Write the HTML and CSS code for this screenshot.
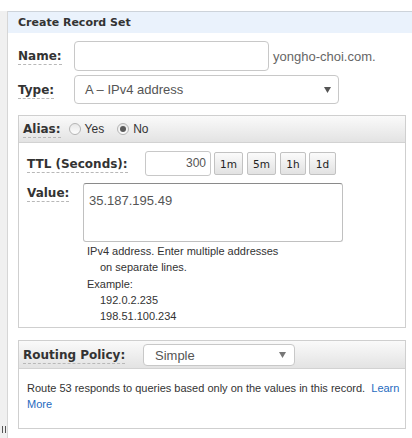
FILE: index.html
```html
<!DOCTYPE html>
<html>
<head>
<meta charset="utf-8">
<link rel="stylesheet" href="styles.css">
</head>
<body>
<div class="page">
  <div class="strip"><span class="grip"><i></i><i></i></span></div>
  <div class="main">
    <div class="header">Create Record Set</div>
    <div class="form">
      <div class="row name-row">
        <span class="lbl w56"><span class="u">Name:</span></span>
        <div class="input name-input"></div>
        <span class="suffix">yongho-choi.com.</span>
      </div>
      <div class="row type-row">
        <span class="lbl w56"><span class="u">Type:</span></span>
        <div class="select type-select"><span>A – IPv4 address</span><svg width="7" height="6" viewBox="0 0 7 6"><path d="M0 0H7L3.5 6Z" fill="#555"/></svg></div>
      </div>

      <div class="panel alias-panel">
        <div class="phead">
          <span class="lbl"><span class="u">Alias:</span></span>
          <span class="radio"></span><span class="rtext">Yes</span>
          <span class="radio on"></span><span class="rtext">No</span>
        </div>
        <div class="pbody">
          <div class="row ttl-row">
            <span class="lbl w118"><span class="u">TTL (Seconds):</span></span>
            <div class="input ttl-input">300</div>
            <span class="btn b1">1m</span>
            <span class="btn b2">5m</span>
            <span class="btn b3">1h</span>
            <span class="btn b4">1d</span>
          </div>
          <div class="row value-row">
            <span class="lbl w56 vlbl"><span class="u">Value:</span></span>
            <div class="textarea">35.187.195.49</div>
          </div>
          <div class="help">
            <div>IPv4 address. Enter multiple addresses</div>
            <div class="ind">on separate lines.</div>
            <div>Example:</div>
            <div class="ind">192.0.2.235</div>
            <div class="ind">198.51.100.234</div>
          </div>
        </div>
      </div>

      <div class="panel route-panel">
        <div class="phead rhead">
          <span class="lbl w120"><span class="u">Routing Policy:</span></span>
          <div class="select route-select"><span>Simple</span><svg width="7" height="6" viewBox="0 0 7 6"><path d="M0 0H7L3.5 6Z" fill="#777"/></svg></div>
        </div>
        <div class="pbody rbody">Route 53 responds to queries based only on the values in this record.&nbsp; <a class="link">Learn More</a></div>
      </div>
    </div>
  </div>
</div>
</body>
</html>
```

FILE: styles.css
```css
html, body {
  margin: 0;
  padding: 0;
  background: #fff;
}
body {
  font-family: "Liberation Sans", Arial, sans-serif;
  color: #333;
  width: 412px;
  height: 438px;
  overflow: hidden;
}
.page {
  display: flex;
  padding-top: 11px;
  height: 427px;
}
.strip {
  width: 7px;
  background: #f0f0f0;
  border-right: 1px solid #d6d6d6;
  display: flex;
  flex-direction: column;
  justify-content: flex-end;
}
.grip {
  display: flex;
  gap: 2px;
  padding-left: 2px;
  margin-bottom: 5px;
}
.grip i {
  display: block;
  width: 1px;
  height: 7px;
  background: #555;
}
.main {
  flex: 1;
}
.header {
  height: 21px;
  border-top: 1px solid #cdd3da;
  background: #eaf2fc;
  padding-left: 10px;
  font-family: "DejaVu Sans", Verdana, sans-serif;
  font-weight: bold;
  font-size: 11px;
  line-height: 22px;
  color: #333;
}
.form {
  padding-left: 10px;
}
.row {
  display: flex;
  align-items: center;
}
.lbl {
  font-family: "DejaVu Sans", Verdana, sans-serif;
  font-weight: bold;
  font-size: 12px;
  color: #333;
  flex: none;
}
.u {
  border-bottom: 1px dashed #b8b8b8;
  padding-bottom: 1px;
}
.w56 { width: 56px; }
.w118 { width: 118px; }
.w120 { width: 120px; }
.name-row {
  margin-top: 8px;
  height: 30px;
}
.input {
  box-sizing: border-box;
  border: 1px solid #c8c8c8;
  border-radius: 4px;
  background: #fff;
}
.name-input {
  width: 195px;
  height: 30px;
}
.suffix {
  margin-left: 4px;
  font-size: 13px;
  color: #666;
}
.type-row {
  margin-top: 4px;
  height: 29px;
}
.select {
  box-sizing: border-box;
  border: 1px solid #c8c8c8;
  border-radius: 4px;
  background: #fff;
  display: flex;
  align-items: center;
  justify-content: space-between;
  font-size: 13px;
  color: #555;
}
.type-select {
  width: 265px;
  height: 29px;
  padding: 0 7px 0 10px;
}
.panel {
  box-sizing: border-box;
  width: 388px;
  border: 1px solid #cfcfcf;
}
.alias-panel {
  margin-top: 11px;
}
.phead {
  height: 27px;
  box-sizing: border-box;
  border-bottom: 1px solid #d2d2d2;
  background: linear-gradient(#fafafa, #e3e3e3);
  display: flex;
  align-items: center;
  padding-left: 4px;
}
.radio {
  box-sizing: border-box;
  width: 12px;
  height: 12px;
  border-radius: 50%;
  border: 1px solid #b5b5b5;
  background: linear-gradient(#e8e8e8, #fdfdfd);
  margin-left: 8px;
  display: flex;
  align-items: center;
  justify-content: center;
}
.radio.on::after {
  content: "";
  width: 6px;
  height: 6px;
  border-radius: 50%;
  background: #5a5a5a;
}
.rtext {
  font-size: 12px;
  color: #333;
  margin-left: 4px;
  margin-right: 5px;
}
.pbody {
  padding: 8px 8px 3px 8px;
}
.ttl-row {
  height: 25px;
}
.ttl-input {
  width: 66px;
  height: 25px;
  text-align: right;
  font-size: 12px;
  color: #555;
  line-height: 23px;
  padding-right: 4px;
  border-radius: 3px;
}
.btn {
  box-sizing: border-box;
  height: 23px;
  border: 1px solid #c2c2c2;
  border-radius: 2px;
  background: linear-gradient(#fbfbfb, #e2e2e2);
  font-family: "DejaVu Sans", Tahoma, sans-serif;
  font-size: 10.5px;
  color: #222;
  display: flex;
  align-items: center;
  justify-content: center;
  margin-left: 4px;
}
.b1 { width: 29px; margin-left: 3px; }
.b2 { width: 29px; }
.b3 { width: 26px; }
.b4 { width: 27px; margin-left: 3px; }
.value-row {
  margin-top: 7px;
  align-items: flex-start;
}
.vlbl {
  padding-top: 3px;
}
.textarea {
  box-sizing: border-box;
  width: 260px;
  height: 59px;
  border: 1px solid #c0c0c0;
  border-top-color: #8a8a8a;
  border-radius: 3px;
  font-size: 13px;
  color: #555;
  padding: 9px 0 0 5px;
}
.help {
  margin-top: 1px;
  margin-left: 60px;
  font-size: 11px;
  line-height: 16.3px;
  color: #333;
}
.ind {
  padding-left: 13px;
}
.route-panel {
  margin-top: 12px;
}
.rhead {
  height: 28px;
  align-items: center;
}
.route-select {
  align-self: flex-start;
  margin-top: 3px;
  width: 152px;
  height: 22px;
  padding: 0 8px 0 11px;
  border-radius: 4px;
}
.rbody {
  padding: 11px 3px 16px 8px;
  font-size: 11px;
  line-height: 16px;
  color: #333;
}
.link {
  color: #1f6bc0;
}
```
